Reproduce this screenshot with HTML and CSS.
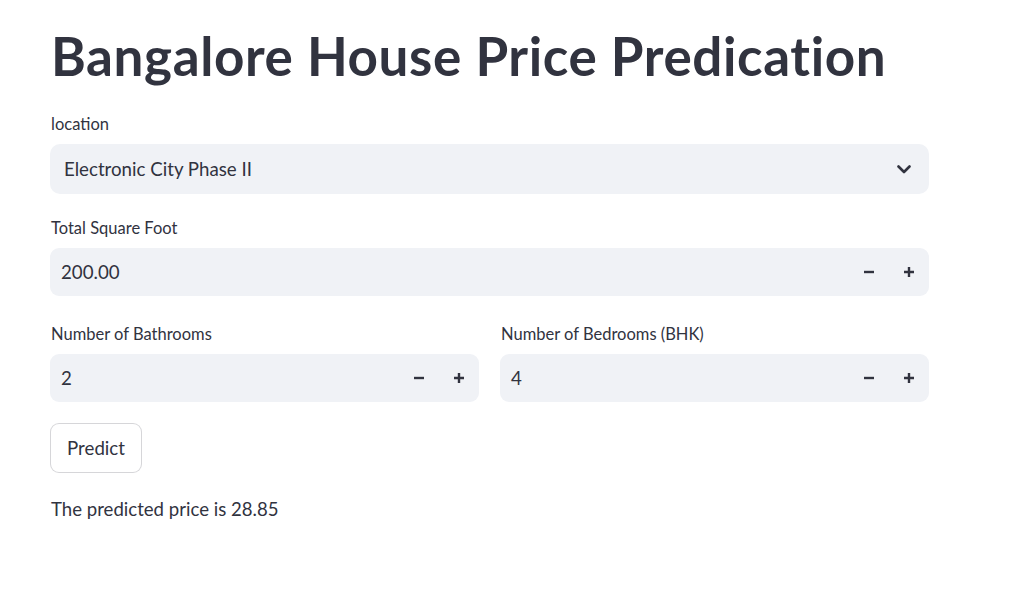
FILE: index.html
```html
<!DOCTYPE html>
<html>
<head>
<meta charset="utf-8">
<link rel="stylesheet" href="styles.css">
</head>
<body>
<main class="app">
  <h1 class="title">Bangalore House Price Predication</h1>

  <div class="field">
    <label class="label">location</label>
    <div class="select">
      <span class="select-value">Electronic City Phase II</span>
      <svg class="chevron" width="14" height="9" viewBox="0 0 14 9"><path d="M1.5 1.5 L7 7 L12.5 1.5" fill="none" stroke="#31333F" stroke-width="2.6" stroke-linecap="round" stroke-linejoin="round"/></svg>
    </div>
  </div>

  <div class="field">
    <label class="label">Total Square Foot</label>
    <div class="number">
      <span class="number-value">200.00</span>
      <div class="steps">
        <span class="step"><svg width="12" height="12" viewBox="0 0 12 12"><path d="M1 6 H11" stroke="#31333F" stroke-width="2.4"/></svg></span>
        <span class="step"><svg width="12" height="12" viewBox="0 0 12 12"><path d="M1 6 H11 M6 1 V11" stroke="#31333F" stroke-width="2.4"/></svg></span>
      </div>
    </div>
  </div>

  <div class="row">
    <div class="field">
      <label class="label">Number of Bathrooms</label>
      <div class="number">
        <span class="number-value">2</span>
        <div class="steps">
          <span class="step"><svg width="12" height="12" viewBox="0 0 12 12"><path d="M1 6 H11" stroke="#31333F" stroke-width="2.4"/></svg></span>
          <span class="step"><svg width="12" height="12" viewBox="0 0 12 12"><path d="M1 6 H11 M6 1 V11" stroke="#31333F" stroke-width="2.4"/></svg></span>
        </div>
      </div>
    </div>
    <div class="field">
      <label class="label">Number of Bedrooms (BHK)</label>
      <div class="number">
        <span class="number-value">4</span>
        <div class="steps">
          <span class="step"><svg width="12" height="12" viewBox="0 0 12 12"><path d="M1 6 H11" stroke="#31333F" stroke-width="2.4"/></svg></span>
          <span class="step"><svg width="12" height="12" viewBox="0 0 12 12"><path d="M1 6 H11 M6 1 V11" stroke="#31333F" stroke-width="2.4"/></svg></span>
        </div>
      </div>
    </div>
  </div>

  <button class="btn">Predict</button>

  <p class="result">The predicted price is 28.85</p>
</main>
</body>
</html>
```

FILE: styles.css
```css
* { box-sizing: border-box; }
html, body { margin: 0; background: #ffffff; }
body {
  font-family: "Lato", "Liberation Sans", sans-serif;
  color: #31333F;
}
.app {
  width: 879px;
  margin-left: 50px;
  padding-top: 23px;
  display: flex;
  flex-direction: column;
}
.title {
  margin: 0 0 0 1px;
  font-size: 53px;
  font-weight: 700;
  line-height: 66px;
  letter-spacing: 0.6px;
}
.field {
  display: flex;
  flex-direction: column;
  margin-top: 24px;
}
.app > .field:first-of-type { margin-top: 25px; }
.label {
  font-size: 16.5px;
  line-height: 20px;
  margin: 0 0 10px 1px;
}
.select {
  height: 50px;
  background: #F0F2F6;
  border-radius: 10px;
  display: flex;
  align-items: center;
  justify-content: space-between;
  padding: 0 18px 0 14px;
}
.select-value { font-size: 18.7px; }
.number {
  height: 48px;
  background: #F0F2F6;
  border-radius: 9px;
  display: flex;
  align-items: center;
  justify-content: space-between;
  padding: 0 14px 0 11px;
}
.number-value { font-size: 18.7px; }
.steps { display: flex; gap: 28px; }
.step { display: flex; width: 12px; height: 12px; }
.row {
  display: grid;
  grid-template-columns: 1fr 1fr;
  gap: 21px;
  margin-top: 28px;
}
.row .field { margin-top: 0; }
.btn {
  align-self: flex-start;
  margin-top: 21px;
  width: 92px;
  height: 50px;
  background: #ffffff;
  border: 1px solid rgba(49, 51, 63, 0.2);
  border-radius: 9px;
  font-family: inherit;
  font-size: 18.7px;
  color: #31333F;
}
.result {
  margin: 25px 0 0 1px;
  font-size: 18.6px;
}
```
